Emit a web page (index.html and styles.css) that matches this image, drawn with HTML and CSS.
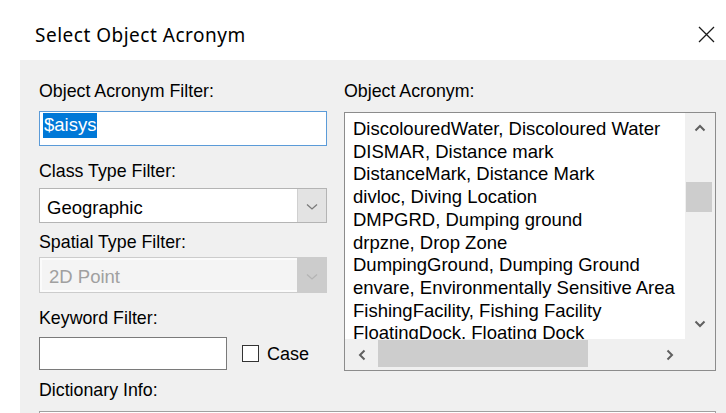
FILE: index.html
```html
<!DOCTYPE html>
<html lang="en">
<head>
<meta charset="utf-8">
<title>Select Object Acronym</title>
<link rel="stylesheet" href="styles.css">
</head>
<body>
<div class="dialog">
  <header class="titlebar">
    <span class="title">Select Object Acronym</span>
    <svg class="close" width="17" height="17" viewBox="0 0 17 17" aria-label="Close">
      <path d="M1 1 L16 16 M16 1 L1 16" stroke="#1a1a1a" stroke-width="1.3" fill="none"/>
    </svg>
  </header>

  <main class="panel">
    <div class="top-row">
      <section class="col-left">
        <div class="lbl">Object Acronym Filter:</div>
        <div class="textbox focused"><span class="sel">$aisys</span></div>

        <div class="lbl lbl-class">Class Type Filter:</div>
        <div class="combo">
          <span class="combo-text">Geographic</span>
          <span class="combo-btn">
            <svg width="12" height="8" viewBox="0 0 12 8"><path d="M1 1.5 L6 6 L11 1.5" stroke="#7a7a7a" stroke-width="1.3" fill="none"/></svg>
          </span>
        </div>

        <div class="lbl lbl-spatial">Spatial Type Filter:</div>
        <div class="combo disabled">
          <span class="combo-text">2D Point</span>
          <span class="combo-btn">
            <svg width="12" height="8" viewBox="0 0 12 8"><path d="M1 1.5 L6 6 L11 1.5" stroke="#b4b4b4" stroke-width="1.3" fill="none"/></svg>
          </span>
        </div>

        <div class="lbl lbl-keyword">Keyword Filter:</div>
        <div class="keyword-row">
          <div class="textbox keyword"></div>
          <span class="checkbox"></span>
          <span class="check-label">Case</span>
        </div>
      </section>

      <section class="col-right">
        <div class="lbl">Object Acronym:</div>
        <div class="listbox">
          <div class="list-main">
            <ul class="list-items">
              <li>DiscolouredWater, Discoloured Water</li>
              <li>DISMAR, Distance mark</li>
              <li>DistanceMark, Distance Mark</li>
              <li>divloc, Diving Location</li>
              <li>DMPGRD, Dumping ground</li>
              <li>drpzne, Drop Zone</li>
              <li>DumpingGround, Dumping Ground</li>
              <li>envare, Environmentally Sensitive Area</li>
              <li>FishingFacility, Fishing Facility</li>
              <li>FloatingDock, Floating Dock</li>
            </ul>
            <div class="vscroll">
              <span class="sb-btn">
                <svg width="12" height="8" viewBox="0 0 12 8"><path d="M1.5 6.5 L6 2 L10.5 6.5" stroke="#606060" stroke-width="2" fill="none"/></svg>
              </span>
              <span class="vtrack"><span class="vthumb"></span></span>
              <span class="sb-btn">
                <svg width="12" height="8" viewBox="0 0 12 8"><path d="M1.5 1.5 L6 6 L10.5 1.5" stroke="#606060" stroke-width="2" fill="none"/></svg>
              </span>
            </div>
          </div>
          <div class="hrow">
            <div class="hscroll">
              <span class="sb-btn hbtn-left">
                <svg width="8" height="12" viewBox="0 0 8 12"><path d="M6.5 1.5 L2 6 L6.5 10.5" stroke="#606060" stroke-width="2" fill="none"/></svg>
              </span>
              <span class="htrack"><span class="hthumb"></span></span>
              <span class="sb-btn hbtn-right">
                <svg width="8" height="12" viewBox="0 0 8 12"><path d="M1.5 1.5 L6 6 L1.5 10.5" stroke="#606060" stroke-width="2" fill="none"/></svg>
              </span>
            </div>
            <div class="corner"></div>
          </div>
        </div>
      </section>
    </div>

    <div class="lbl lbl-dict">Dictionary Info:</div>
    <div class="dict-box"></div>
  </main>
</div>
</body>
</html>
```

FILE: styles.css
```css
* {
  box-sizing: border-box;
}

html,
body {
  margin: 0;
  padding: 0;
  background: #ffffff;
  overflow: hidden;
}

.dialog {
  width: 726px;
  height: 413px;
  overflow: hidden;
  font-family: "Liberation Sans", Arial, sans-serif;
  color: #000000;
}

/* ---- title bar ---- */
.titlebar {
  height: 60px;
  display: flex;
  justify-content: space-between;
  align-items: flex-start;
  padding: 23px 11px 0 35px;
}

.title {
  font-family: "Noto Sans", "Open Sans", sans-serif;
  font-size: 19px;
  letter-spacing: 0.5px;
  line-height: 24px;
  color: #000000;
}

.close {
  margin-top: 3px;
}

/* ---- client area ---- */
.panel {
  margin-left: 20px;
  height: 353px;
  background: #f0f0f0;
  padding: 21px 10px 0 19px;
}

.top-row {
  display: flex;
  align-items: flex-start;
  gap: 17px;
}

.col-left {
  width: 288px;
  display: flex;
  flex-direction: column;
}

.col-right {
  width: 372px;
  display: flex;
  flex-direction: column;
}

.lbl {
  font-size: 17.8px;
  line-height: 20px;
  height: 20px;
  white-space: nowrap;
}

.lbl-class { margin-top: 15px; }
.lbl-spatial { margin-top: 9px; }
.lbl-keyword { margin-top: 15px; }
.lbl-dict { margin-top: 9px; }

/* ---- edit boxes ---- */
.textbox {
  height: 35px;
  margin-top: 10px;
  background: #ffffff;
  border: 1px solid #7a7a7a;
  padding: 1px 0 0 3px;
}

.textbox.focused {
  border-color: #5b9bd8;
}

.sel {
  display: inline-block;
  background: #0078d7;
  color: #ffffff;
  font-size: 18.5px;
  line-height: 24px;
  height: 25px;
  padding: 0 1px;
}

/* ---- combo boxes ---- */
.combo {
  height: 35px;
  margin-top: 7px;
  display: flex;
  background: #ffffff;
  border: 1px solid #b4b4b4;
}

.combo-text {
  flex: 1;
  font-size: 18.5px;
  line-height: 33px;
  padding: 2px 0 0 7px;
}

.combo-btn {
  width: 29px;
  display: flex;
  align-items: center;
  justify-content: center;
  background: #e3e3e3;
  border-left: 1px solid #d0d0d0;
  padding-top: 3px;
}

.combo.disabled {
  height: 36px;
  margin-top: 5px;
  background: #f0f0f0;
  border-color: #cccccc;
}

.combo.disabled .combo-text {
  color: #a0a0a0;
  background: #f4f4f4;
  border: 2px solid #fbfbfb;
  border-right: none;
  line-height: 29px;
}

.combo.disabled .combo-btn {
  background: #cccccc;
  border-left: none;
}

/* ---- keyword row ---- */
.keyword-row {
  margin-top: 9px;
  height: 33px;
  display: flex;
  align-items: center;
}

.textbox.keyword {
  margin-top: 0;
  width: 188px;
  height: 33px;
}

.checkbox {
  width: 17px;
  height: 17px;
  margin-left: 15px;
  background: #ffffff;
  border: 1px solid #333333;
}

.check-label {
  margin-left: 8px;
  font-size: 18px;
  line-height: 20px;
}

/* ---- list box ---- */
.listbox {
  margin-top: 11px;
  height: 259px;
  border: 1px solid #8c8c8c;
  background: #ffffff;
  display: flex;
  flex-direction: column;
}

.list-main {
  height: 226px;
  display: flex;
}

.list-items {
  list-style: none;
  margin: 0;
  width: 340px;
  padding: 5px 0 0 8px;
  overflow: hidden;
  font-size: 18.5px;
  line-height: 22.7px;
  white-space: nowrap;
}

.vscroll {
  width: 30px;
  background: #f0f0f0;
  display: flex;
  flex-direction: column;
}

.sb-btn {
  display: flex;
  align-items: center;
  justify-content: center;
  flex: none;
}

.vscroll .sb-btn {
  height: 30px;
}

.vtrack {
  flex: 1;
  display: flex;
  flex-direction: column;
  align-items: flex-start;
}

.vthumb {
  margin-top: 39px;
  margin-left: 1px;
  width: 26px;
  height: 30px;
  background: #cdcdcd;
}

.hrow {
  flex: 1;
  display: flex;
}

.hscroll {
  width: 340px;
  background: #f0f0f0;
  display: flex;
}

.hbtn-left {
  width: 33px;
}

.hbtn-right {
  width: 30px;
}

.htrack {
  flex: 1;
  display: flex;
  align-items: stretch;
  padding: 1px 0 3px 0;
}

.hthumb {
  width: 210px;
  background: #cdcdcd;
}

.corner {
  flex: 1;
  background: #f0f0f0;
}

/* ---- dictionary info ---- */
.dict-box {
  margin-top: 11px;
  width: 677px;
  height: 30px;
  border-top: 1px solid #a0a0a0;
  border-left: 1px solid #a0a0a0;
  border-right: 1px solid #a0a0a0;
  background: #ffffff;
}
```
